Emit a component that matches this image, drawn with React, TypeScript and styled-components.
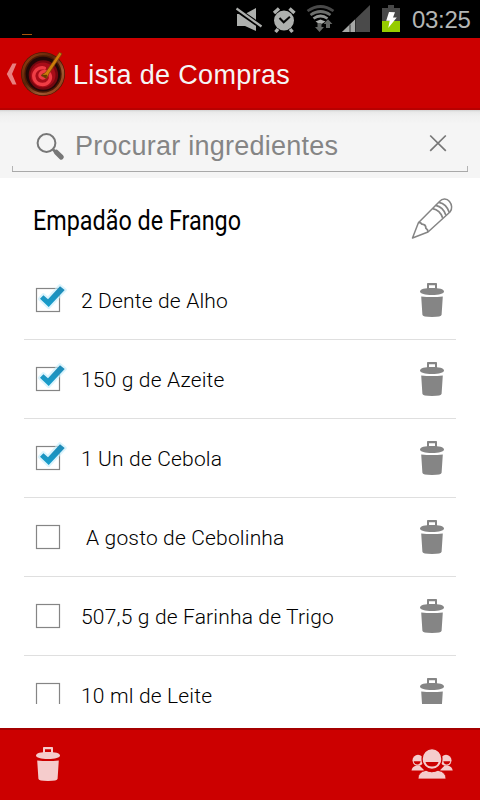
import React from "react";
import styled, { createGlobalStyle } from "styled-components";

const GlobalStyle = createGlobalStyle`
  * { box-sizing: border-box; }
  body { margin: 0; background: #fff; }
  svg { display: block; overflow: visible; flex: none; }
`;

const Screen = styled.main`
  width: 480px;
  height: 800px;
  display: flex;
  flex-direction: column;
  overflow: hidden;
  background: #fff;
  font-family: "Liberation Sans", Arial, sans-serif;
`;

const StatusBar = styled.div`
  height: 38px;
  flex: none;
  display: flex;
  background: #000;
`;

const Notification = styled.div`
  width: 10px;
  height: 1px;
  margin: 34px 0 0 22px;
  background: #a8540c;
`;

const StatusIcons = styled.div`
  margin-left: 204px;
  height: 38px;
`;

const Clock = styled.time`
  margin-left: 11px;
  line-height: 40px;
  font-size: 24px;
  letter-spacing: -0.3px;
  color: #b4b6b4;
`;

const Header = styled.header`
  height: 72px;
  flex: none;
  display: flex;
  align-items: center;
  padding-left: 5px;
  background: #cc0000;
  border-bottom: 2px solid #b80000;
`;

const Title = styled.h1`
  margin: 3px 0 0 7px;
  font-size: 27px;
  line-height: 32px;
  font-weight: 400;
  letter-spacing: 0.35px;
  color: #f5f5f5;
  white-space: nowrap;
`;

const SearchPanel = styled.div`
  height: 68px;
  flex: none;
  padding: 0 12px;
  background: linear-gradient(#d2d2d2 0, #e9e9e9 2px, #f0f0f0 6px, #f5f5f5 14px);
`;

const SearchField = styled.div`
  height: 62px;
  display: flex;
  padding: 0 21px 0 24px;
  border-bottom: 1px solid #a9a9a9;
  background:
    linear-gradient(#b4b4b4, #b4b4b4) left bottom / 1px 5px no-repeat,
    linear-gradient(#b4b4b4, #b4b4b4) right bottom / 1px 5px no-repeat;
`;

const Placeholder = styled.span`
  flex: 1;
  margin: 20px 0 0 11px;
  font-size: 27px;
  line-height: 32px;
  letter-spacing: 0.24px;
  color: #858585;
  white-space: nowrap;
`;

const ListHead = styled.div`
  height: 83px;
  flex: none;
  display: flex;
  justify-content: space-between;
  padding: 0 27px 0 33px;
`;

const RecipeName = styled.h2`
  margin: 27px 0 0;
  font: 400 27px/32px Roboto, sans-serif;
  color: #000;
  white-space: nowrap;
  transform: scaleX(0.865);
  transform-origin: left;
`;

const EditButton = styled.span`
  margin-top: 19px;
`;

const Items = styled.ul`
  height: 443px;
  flex: none;
  margin: 0 24px 24px;
  padding: 0;
  overflow: hidden;
  list-style: none;
`;

const Item = styled.li`
  height: 79px;
  display: flex;
  align-items: flex-start;
  border-bottom: 1px solid #dfdfdf;
`;

const ItemName = styled.span<{ $indent?: boolean }>`
  flex: 1;
  padding: 32px 0 0 ${(p) => (p.$indent ? 12 : 7)}px;
  font: 300 21px/16px Roboto, sans-serif;
  letter-spacing: 0.17px;
  color: #000;
  white-space: nowrap;
`;

const Footer = styled.footer`
  height: 72px;
  flex: none;
  display: flex;
  justify-content: space-between;
  padding: 17px 27px 0 36px;
  background: #cc0000;
  border-top: 2px solid #a50000;
`;

const DeleteButton = styled.span`
  margin: 22px 12px 0 0;
`;

const Trash = ({ color }: { color: string }) => (
  <svg width="24" height="35" viewBox="0 0 24 35" fill={color}>
    <path d="M7 6V0.8Q7 0 7.8 0H16.2Q17 0 17 .8V6H15V2.3H9V6Z" />
    <path d="M0 8.6C0 6 5 5 12 5s12 1 12 3.6c0 2-5 3.5-12 3.5S0 10.6 0 8.6Z" />
    <path d="M1.2 13.4Q12 14.8 22.8 13.4L21.6 31.8Q21.5 34 12 34T2.4 31.8Z" />
  </svg>
);

const tickPath = "m40 38.8 3.4-3.6 4.6 4L60 26.2l4.7 3.8-16 17Z";

const Checkbox = ({ checked }: { checked: boolean }) => (
  <svg width="50" height="78" viewBox="24 1 50 78">
    <rect x="36.5" y="28.5" width="23" height="23" fill="#fff" stroke="#858585" strokeWidth="1.2" />
    {checked && (
      <g>
        <path d={tickPath} fill="#b9e9fb" stroke="#c9effc" strokeWidth="4" strokeLinejoin="round" opacity=".65" />
        <path d={tickPath} fill="url(#tick)" />
      </g>
    )}
  </svg>
);

const Pencil = () => (
  <svg width="42" height="42" viewBox="411 197 42 42" fill="none" stroke="#858585" strokeWidth="1.5" strokeLinejoin="round">
    <path d="M412.5 238 418.4 222.8 439.5 201.5C442.5 198 447 198.5 449.5 201.5S452.5 209 450 212L428 232Z" />
    <path d="M418.4 222.8q1.6-1 3.5 1.3 4 .2 4 4.1 2.2 1.2 2.1 3.8" strokeWidth="1.8" />
    <path d="M438.8 202.3q7.7 1.4 10.5 10.2M435.7 205.4q7.5 1.7 10.2 9.8M432.7 208.7q7.3 1.5 10 9.2" strokeWidth="1.7" />
  </svg>
);

const Logo = () => (
  <svg width="61" height="48" viewBox="5 49 61 48">
    <path d="M12.5 63.5H16.5L12 74 16.5 84.5h-4L6.8 74Z" fill="#e88080" />
    <circle cx="43" cy="74" r="22" fill="#4b1904" />
    <circle cx="43" cy="74" r="20" fill="none" stroke="url(#wood)" strokeWidth="2.6" />
    <circle cx="43" cy="74" r="17.3" fill="#210807" />
    <circle cx="43.4" cy="75" r="14.7" fill="#760710" />
    <circle cx="43" cy="75" r="12.5" fill="#a80c18" />
    <path d="M44.5 77.5c-3 1.5-5.5-1-4-4 1.7-3 7.5-3 9.3.7 2.3 5-1.5 10.3-7.3 10.3-7 0-10.5-7-8-12 2-4.3 6.5-5.2 10-4.5" fill="none" stroke="#ef3d45" strokeWidth="3.3" strokeLinecap="round" />
    <path d="M59.4 52.2 62 53.8 49 73.5 46.5 78.5 41 75.5 45.5 72.5Z" fill="#ce7c09" stroke="#76410b" strokeWidth=".7" />
    <path d="m41 75 6-.3-.5 4Z" fill="#673704" />
  </svg>
);

const SystemIcons = () => (
  <svg width="165" height="38" viewBox="236 0 165 38" fill="#aeb0ae">
    <path d="M237 14h8L256 8v23l-11-5h-8Z" />
    <path d="m236 9 26 18" stroke="#000" strokeWidth="5" />
    <path d="m236.5 8.5 25 18" stroke="#aeb0ae" strokeWidth="2.2" />
    <path d="m274 13 5-4.5M294.5 13l-5-4.5M278 29l-2.5 3M290 29l2.5 3" stroke="#aeb0ae" strokeWidth="3.4" />
    <circle cx="284" cy="20.5" r="10" />
    <path d="m279.5 18 4.2 4.3 6.2-5.5" fill="none" stroke="#050505" strokeWidth="2" />
    <g fill="none" strokeWidth="2.7">
      <path d="M307.5 11q13-9 26 0" stroke="#494949" />
      <path d="M310.5 15q10-7 20 0" stroke="#6e706e" />
      <path d="M313.5 18.5q7-5 14 0" stroke="#929492" />
    </g>
    <path d="m315.5 21.5 5-2 5 2-5 3.2Z" />
    <path d="M317.5 23v4H315l4.5 5 4.5-5h-2.5v-4ZM326 28v-4h-2.4l4.4-4.8 4.4 4.8H330v4Z" fill="#656765" />
    <path d="M342 32 370 5v27Z" fill="#4a4a4a" />
    <path d="m342 32 13-12.5V32Z" fill="#a6a8a6" />
    <path d="M350 24.5V32M355.5 19v13" stroke="#303030" />
    <path d="M382 8h6V5h6v3h6v13h-18Z" fill="#484848" />
    <path d="M382 21h18v11h-18Z" fill="#96cc00" />
    <path d="m389 12 6 .2-2 5.2h3.8L388.2 28l1.5-7.3h-3.5Z" fill="#fff" />
  </svg>
);

const SearchIcon = () => (
  <svg width="28" height="61" viewBox="36 110 28 61" fill="none" stroke="#777">
    <circle cx="46.5" cy="143" r="8.9" strokeWidth="2" />
    <path d="m53 149.5 3 3" strokeWidth="2.6" />
    <path d="m56.3 152.2 5 4.9" strokeWidth="5" strokeLinecap="round" />
  </svg>
);

const ClearIcon = () => (
  <svg width="18" height="61" viewBox="429 110 18 61" stroke="#777" strokeWidth="1.7">
    <path d="m430.2 135.5 15.6 15.3M445.8 135.5l-15.6 15.3" />
  </svg>
);

const People = () => (
  <svg width="42" height="34" viewBox="411 747 42 34">
    <g fill="#f5cccc">
      <circle cx="418" cy="760.3" r="5.5" />
      <circle cx="446" cy="760.3" r="5.5" />
      <path d="M411.5 770.5q.5-4 5-5h3l5 5ZM452.7 770.5q-.5-4-5-5h-3l-5 5Z" />
      <path d="M413.7 761.2h7q-.8 3.5-3.4 3.3-3 0-3.6-3.3ZM443.3 761.2h7q-.8 3.3-3.6 3.3-2.6.2-3.4-3.3Z" fill="#c00" />
      <ellipse cx="432" cy="759" rx="9.9" ry="10.4" stroke="#c00" strokeWidth="1.3" />
      <path d="M418 779q0-7.3 8-8.6 5.5 3 12 0 8 1.3 8 8.6Z" stroke="#c00" strokeWidth=".8" />
    </g>
    <path d="M425.5 762h13q-1.2 4.5-6.5 4.5t-6.5-4.5Z" fill="#c00" />
  </svg>
);

const Gradients = () => (
  <svg width="0" height="0">
    <defs>
      <linearGradient id="tick" x1="0" y1="0" x2="0" y2="1">
        <stop offset="0" stopColor="#2189b5" />
        <stop offset="1" stopColor="#169fcd" />
      </linearGradient>
      <linearGradient id="wood" x1="0" y1="0" x2="1" y2="1">
        <stop offset="0" stopColor="#994013" />
        <stop offset=".4" stopColor="#5c2408" />
        <stop offset=".7" stopColor="#a05a34" />
        <stop offset="1" stopColor="#8a3208" />
      </linearGradient>
    </defs>
  </svg>
);

const ingredients = [
  { name: "2 Dente de Alho", checked: true },
  { name: "150 g de Azeite", checked: true },
  { name: "1 Un de Cebola", checked: true },
  { name: "A gosto de Cebolinha", checked: false, indent: true },
  { name: "507,5 g de Farinha de Trigo", checked: false },
  { name: "10 ml de Leite", checked: false },
];

export default function App() {
  return (
    <Screen>
      <GlobalStyle />
      <StatusBar>
        <Gradients />
        <Notification />
        <StatusIcons><SystemIcons /></StatusIcons>
        <Clock>03:25</Clock>
      </StatusBar>
      <Header>
        <Logo />
        <Title>Lista de Compras</Title>
      </Header>
      <SearchPanel>
        <SearchField>
          <SearchIcon />
          <Placeholder>Procurar ingredientes</Placeholder>
          <ClearIcon />
        </SearchField>
      </SearchPanel>
      <ListHead>
        <RecipeName>Empadão de Frango</RecipeName>
        <EditButton><Pencil /></EditButton>
      </ListHead>
      <Items>
        {ingredients.map((item) => (
          <Item key={item.name}>
            <Checkbox checked={item.checked} />
            <ItemName $indent={item.indent}>{item.name}</ItemName>
            <DeleteButton><Trash color="#858585" /></DeleteButton>
          </Item>
        ))}
      </Items>
      <Footer>
        <Trash color="#f5cccc" />
        <People />
      </Footer>
    </Screen>
  );
}
